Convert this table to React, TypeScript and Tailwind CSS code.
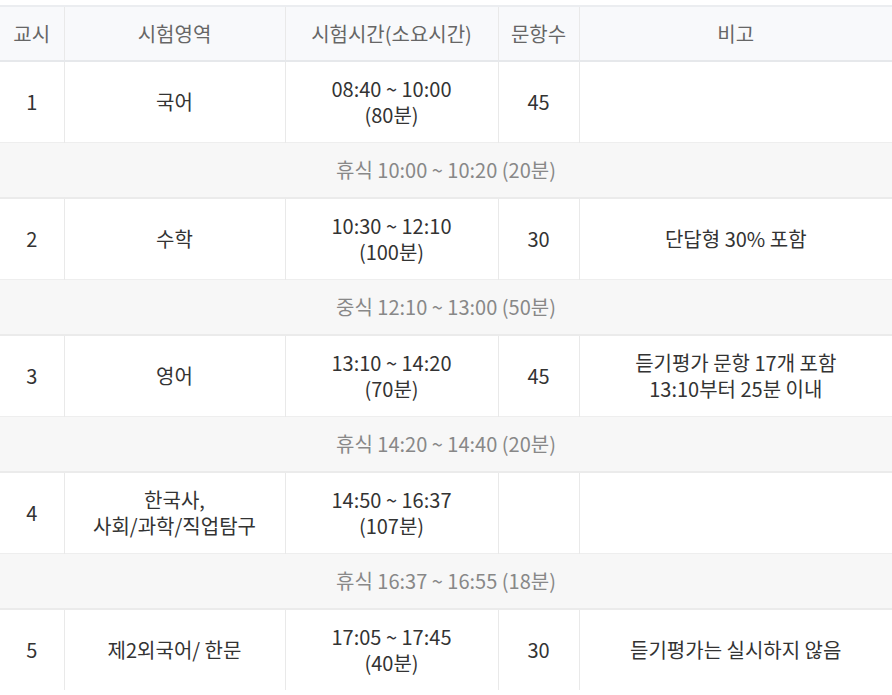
const rows: (
  | { kind: "exam"; no: string; subject: string[]; time: string; dur: string; count: string; note: string[] }
  | { kind: "break"; text: string }
)[] = [
  { kind: "exam", no: "1", subject: ["국어"], time: "08:40 ~ 10:00", dur: "(80분)", count: "45", note: [] },
  { kind: "break", text: "휴식 10:00 ~ 10:20 (20분)" },
  { kind: "exam", no: "2", subject: ["수학"], time: "10:30 ~ 12:10", dur: "(100분)", count: "30", note: ["단답형 30% 포함"] },
  { kind: "break", text: "중식 12:10 ~ 13:00 (50분)" },
  { kind: "exam", no: "3", subject: ["영어"], time: "13:10 ~ 14:20", dur: "(70분)", count: "45", note: ["듣기평가 문항 17개 포함", "13:10부터 25분 이내"] },
  { kind: "break", text: "휴식 14:20 ~ 14:40 (20분)" },
  { kind: "exam", no: "4", subject: ["한국사,", "사회/과학/직업탐구"], time: "14:50 ~ 16:37", dur: "(107분)", count: "", note: [] },
  { kind: "break", text: "휴식 16:37 ~ 16:55 (18분)" },
  { kind: "exam", no: "5", subject: ["제2외국어/ 한문"], time: "17:05 ~ 17:45", dur: "(40분)", count: "30", note: ["듣기평가는 실시하지 않음"] },
];

const cell = "border-r border-[#e9e9e9] last:border-r-0 text-center align-middle";

export default function App() {
  return (
    <div
      className="w-[892px] bg-white pt-[5px] text-[20px] leading-[26px] text-[#333]"
      style={{ fontFamily: '"Noto Sans CJK KR", "Noto Sans", sans-serif' }}
    >
      <table className="w-full table-fixed border-collapse border-t-2 border-[#ebedf0]">
        <colgroup>
          <col className="w-[64px]" />
          <col className="w-[221px]" />
          <col className="w-[213px]" />
          <col className="w-[81px]" />
          <col />
        </colgroup>
        <thead>
          <tr className="h-[55px] bg-[#f8f9fb] text-[#666] border-b-2 border-[#e6e8eb]">
            <th className={`${cell} font-normal`}>교시</th>
            <th className={`${cell} font-normal`}>시험영역</th>
            <th className={`${cell} font-normal`}>시험시간(소요시간)</th>
            <th className={`${cell} font-normal`}>문항수</th>
            <th className={`${cell} font-normal`}>비고</th>
          </tr>
        </thead>
        <tbody>
          {rows.map((r, i) =>
            r.kind === "break" ? (
              <tr key={i} className="h-[56px] bg-[#f7f7f7] border-t border-[#eeeeee] border-b-2 border-b-[#ebebeb]">
                <td colSpan={5} className="text-center align-middle text-[#888]">
                  {r.text}
                </td>
              </tr>
            ) : (
              <tr key={i} className="h-[81px]">
                <td className={cell}>{r.no}</td>
                <td className={cell}>
                  {r.subject.map((s) => (
                    <div key={s}>{s}</div>
                  ))}
                </td>
                <td className={cell}>
                  <div>{r.time}</div>
                  <div>{r.dur}</div>
                </td>
                <td className={cell}>{r.count}</td>
                <td className={cell}>
                  {r.note.map((s) => (
                    <div key={s}>{s}</div>
                  ))}
                </td>
              </tr>
            )
          )}
        </tbody>
      </table>
    </div>
  );
}
